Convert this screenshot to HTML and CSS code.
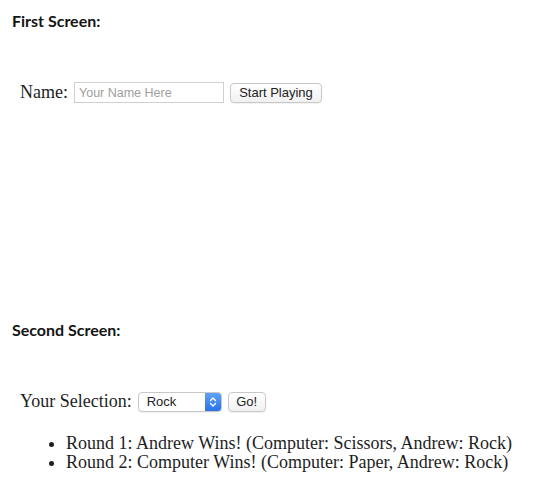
FILE: index.html
```html
<!DOCTYPE html>
<html>
<head>
<meta charset="utf-8">
<link rel="stylesheet" href="styles.css">
</head>
<body>
  <section class="screen first">
    <h2 class="label">First Screen:</h2>
    <div class="row">
      <span class="field-label">Name:</span>
      <span class="input">Your Name Here</span>
      <span class="btn">Start Playing</span>
    </div>
  </section>
  <section class="screen second">
    <h2 class="label">Second Screen:</h2>
    <div class="row">
      <span class="field-label">Your Selection:</span>
      <span class="select"><span class="select-text">Rock</span><span class="select-arrow"><svg width="8" height="12" viewBox="0 0 8 12"><path d="M1.5 4.5 L4 2 L6.5 4.5 M1.5 7.5 L4 10 L6.5 7.5" fill="none" stroke="#fff" stroke-width="1.4" stroke-linecap="round" stroke-linejoin="round"/></svg></span></span>
      <span class="btn">Go!</span>
    </div>
    <ul class="rounds">
      <li>Round 1: Andrew Wins! (Computer: Scissors, Andrew: Rock)</li>
      <li>Round 2: Computer Wins! (Computer: Paper, Andrew: Rock)</li>
    </ul>
  </section>
</body>
</html>
```
FILE: styles.css
```css
html, body {
  margin: 0;
  padding: 0;
  background: #fff;
}
body {
  padding: 12px 0 0 12px;
  color: #1a1a1a;
}
.label {
  margin: 0;
  font-family: "Lato", "Open Sans", sans-serif;
  font-weight: 700;
  font-size: 16px;
  line-height: 18px;
  color: #141414;
}
.row {
  display: flex;
  align-items: center;
  gap: 6px;
  margin-left: 8px;
}
.first .row {
  margin-top: 52px;
}
.second {
  margin-top: 218px;
}
.second .row {
  margin-top: 52px;
}
.field-label {
  font-family: "Liberation Serif", serif;
  font-size: 18px;
  color: #1e1e1e;
}
.input {
  box-sizing: border-box;
  width: 150px;
  height: 21px;
  border: 1px solid #cfcfcf;
  font-family: "Liberation Sans", sans-serif;
  font-size: 12.5px;
  color: #a0a0a0;
  padding: 0 4px;
  display: flex;
  align-items: center;
}
.btn {
  box-sizing: border-box;
  height: 20px;
  border: 1px solid #c8c8c8;
  border-radius: 4px;
  background: linear-gradient(#ffffff, #f1f1f1);
  font-family: "Liberation Sans", sans-serif;
  font-size: 13px;
  color: #222;
  display: flex;
  align-items: center;
  justify-content: center;
  box-shadow: 0 1px 1px rgba(0,0,0,0.06);
}
.first .btn {
  width: 92px;
}
.second .btn {
  width: 38px;
}
.select {
  box-sizing: border-box;
  width: 84px;
  height: 20px;
  border: 1px solid #c8c8c8;
  border-radius: 4px;
  display: flex;
  overflow: hidden;
  background: #fff;
  box-shadow: 0 1px 1px rgba(0,0,0,0.06);
}
.select-text {
  flex: 1;
  font-family: "Liberation Sans", sans-serif;
  font-size: 13px;
  color: #222;
  padding-left: 8px;
  display: flex;
  align-items: center;
}
.select-arrow {
  width: 16px;
  background: linear-gradient(#5fa2f5, #2a72e6);
  display: flex;
  align-items: center;
  justify-content: center;
}
.rounds {
  margin: 22px 0 0 38px;
  padding: 0 0 0 16px;
  font-family: "Liberation Serif", serif;
  font-size: 18px;
  line-height: 19px;
  color: #1e1e1e;
}
```
